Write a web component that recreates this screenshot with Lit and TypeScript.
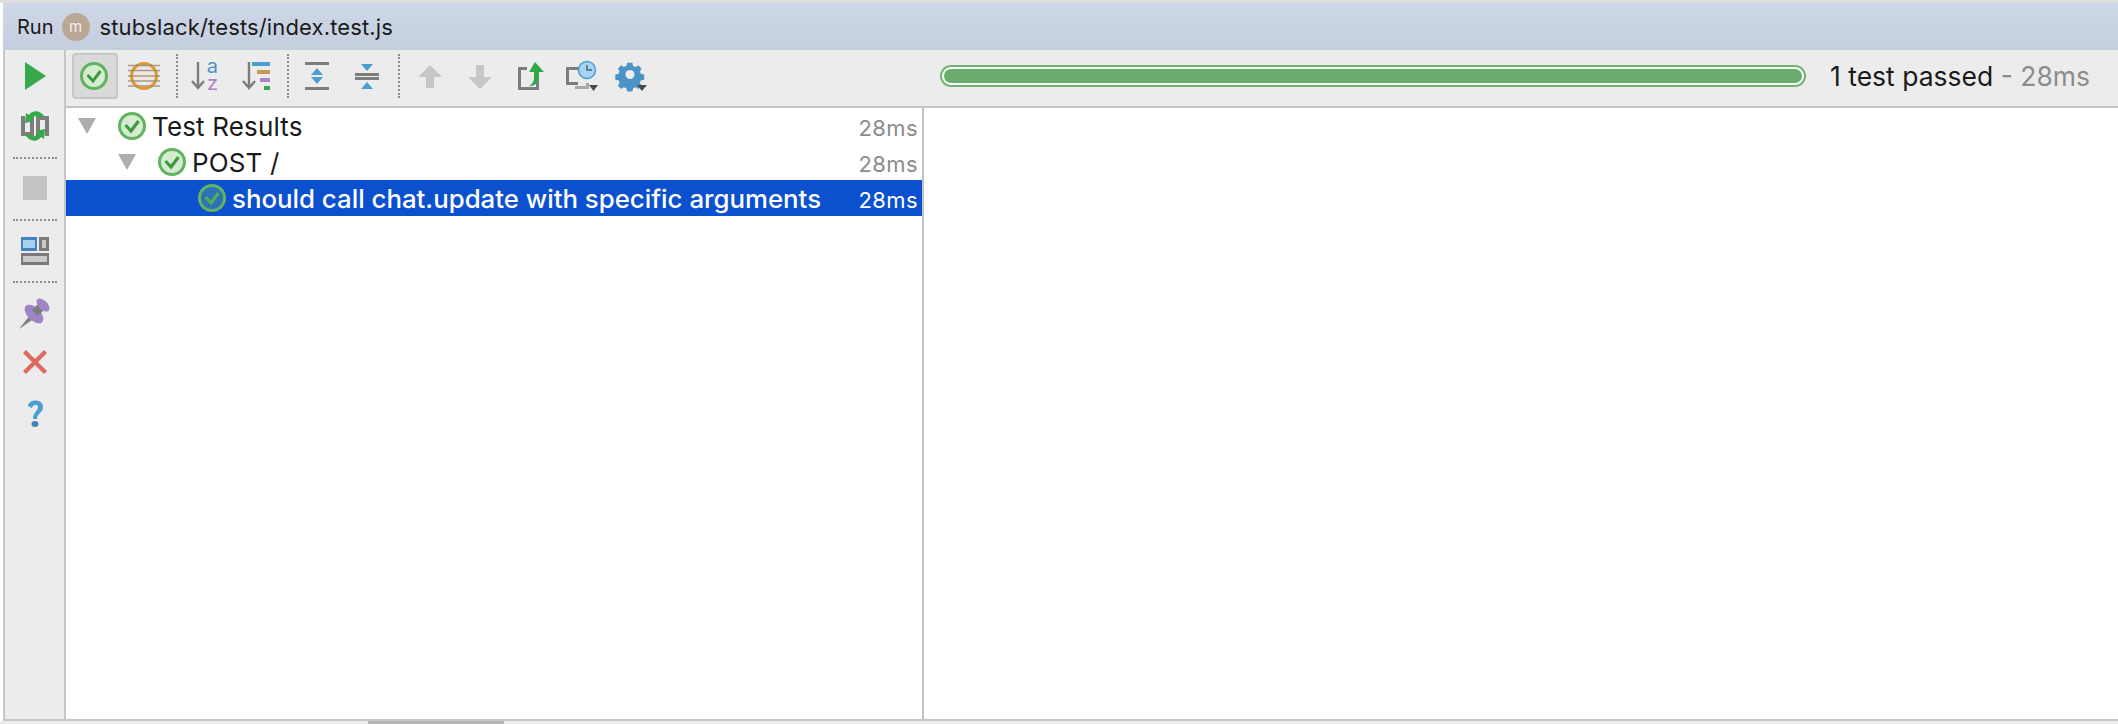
import { LitElement, html, css, svg } from "lit";
import { customElement } from "lit/decorators.js";

const check = (sel = false) => html`<svg class="chk" width="30" height="30" viewBox="0 0 30 30">
  <circle cx="15" cy="15" r="12.500" fill="${sel ? "#2d72b8" : "#d5ecd3"}" stroke="#62b25f" stroke-width="3"/>
  <path d="M8.500 14l5.500 6 7.500-10" fill="none" stroke="${sel ? "#4fb04f" : "#3f9a3f"}" stroke-width="3.200"/>
</svg>`;

const tri = html`<svg width="18" height="16" viewBox="0 0 18 16"><path d="M0 0h18l-9 16z" fill="#adadad"/></svg>`;

const ICONS: Record<string, unknown> = {
  play: svg`<path d="M6 2l21 14-21 14z" fill="#35a84a"/>`,
  rerun: svg`<g transform="translate(0 1)"><path d="M2 6h4v16h5v-16h4v20h-13zM17 6h13v20h-4v-16h-5v16h-4z" fill="#7d7d7d"/>
    <path d="M25 6C21 0 13 0 10 5L7 3 6 13l9-2-2-2.500c3-3.500 6-3.500 8-.5z" fill="#36a84a"/>
    <path d="M25 6C21 0 13 0 10 5L7 3 6 13l9-2-2-2.500c3-3.500 6-3.500 8-.5z" fill="#36a84a" transform="rotate(180 16 16)"/></g>`,
  stop: svg`<rect x="4" y="3" width="24" height="24" fill="#c4c4c4"/>`,
  layout: svg`<rect x="2" y="2" width="16" height="14" fill="#3f83c2"/><rect x="4" y="5" width="12" height="8" fill="#a9d2f2"/>
    <rect x="20" y="2" width="10" height="14" fill="#7a7a7a"/><rect x="23" y="5" width="4" height="8" fill="#c9c9c9"/>
    <rect x="2" y="18" width="28" height="12" fill="#7a7a7a"/><rect x="4" y="21" width="24" height="6" fill="#c9c9c9"/>`,
  pin: svg`<path d="M0 32l12-15 4 4z" fill="#7d7d7d"/>
    <ellipse cx="15" cy="17" rx="6.500" ry="11.500" transform="rotate(-45 15 17)" fill="#a184c8"/>
    <path d="M13 13l7-7 6 6-7 7z" fill="#7d7d7d"/>
    <ellipse cx="24" cy="8" rx="4.500" ry="8" transform="rotate(-45 24 8)" fill="#a184c8"/>`,
  close: svg`<path d="M7 4l9 9 9-9 3 3-9 9 9 9-3 3-9-9-9 9-3-3 9-9-9-9z" fill="#dd6a5c"/>`,
  help: svg`<path d="M9 10c0-7 15-8 15 1 0 6-6 6-6 12h-4c0-7 5-8 5-12 0-3-5-3-6 1z" fill="#4b9fd0"/><ellipse cx="16" cy="28" rx="3.500" ry="3" fill="#3f86b8"/>`,
  filterPass: svg`<g transform="translate(-1 0)"><circle cx="16" cy="16" r="12.500" fill="#d5ecd3" stroke="#62b25f" stroke-width="3"/><path d="M9.500 15l5.500 6 7.500-10" fill="none" stroke="#3f9a3f" stroke-width="3"/></g>`,
  filterIgn: svg`<g transform="translate(-1 0)"><circle cx="16" cy="16" r="12.500" fill="#efe8dc" stroke="#dd9c2c" stroke-width="3"/>
    <path d="M0 5.500h32M0 10.500h32M0 16h32M0 21h32M0 26h32" stroke="#9c8c7c" stroke-width="1.600" opacity=".85"/></g>`,
  sortAz: svg`<path d="M8 2v26M2 21l6 7 6-7" fill="none" stroke="#7d7d7d" stroke-width="2.400"/>`,
  sortDur: svg`<path d="M9 2v26M3 21l6 7 6-7" fill="none" stroke="#7d7d7d" stroke-width="2.400"/>
    <rect x="12" y="2" width="18" height="4" fill="#4b9fd0"/><rect x="17" y="10" width="13" height="4" fill="#c99a4e"/>
    <rect x="20" y="18" width="10" height="4" fill="#a884c8"/><rect x="24" y="26" width="6" height="4" fill="#36a84a"/>`,
  expand: svg`<rect x="4" y="2" width="24" height="3" fill="#7d7d7d"/><rect x="4" y="27" width="24" height="3" fill="#7d7d7d"/>
    <path d="M16 8l6 7h-12z" fill="#4b9fd0"/><path d="M16 24l6-7h-12z" fill="#4b9fd0"/>`,
  collapse: svg`<rect x="4" y="13" width="24" height="3" fill="#7d7d7d"/><rect x="4" y="17" width="24" height="3" fill="#7d7d7d"/>
    <path d="M16 11l6-7h-12z" fill="#4b9fd0"/><path d="M16 22l6 7h-12z" fill="#4b9fd0"/>`,
  up: svg`<path d="M16 5l12 12h-8v11h-8v-11h-8z" fill="#c6c6c6"/>`,
  down: svg`<path d="M16 29l12-12h-8v-12h-8v12h-8z" fill="#c6c6c6"/>`,
  exportT: svg`<path d="M4 7h9v3h-6v17h15v-8h3v11h-21z" fill="#7d7d7d"/>
    <path d="M21 2l9 10h-5v5c0 6-4 9-10 9 3-2 5-4 5-9v-5h-5z" fill="#2ea84a"/>`,
  history: svg`<path d="M2 7h15v3h-12v12h9v3h-12z" fill="#7d7d7d"/><path d="M22 20v3h3v6h-14v-3h11z" fill="#a9a9a9"/>
    <circle cx="23" cy="10" r="8.500" fill="#a9d2f2" stroke="#4b9fd0" stroke-width="1.500"/><path d="M23 5v5h5" fill="none" stroke="#3d6a8a" stroke-width="1.500"/>
    <path d="M25 25h9l-4.500 6z" fill="#4a4a4a"/>`,
  gear: svg`<path d="M12 2h6l1 4 3 1 3-2 4 4-2 3 1 3 4 1v6l-4 1-1 3 2 3-4 4-3-2-3 1-1 4h-6l-1-4-3-1-3 2-4-4 2-3-1-3-4-1v-6l4-1 1-3-2-3 4-4 3 2 3-1z" transform="translate(0 1) scale(.85)" fill="#4b94c6"/>
    <circle cx="13" cy="14.500" r="4.500" fill="#ececec"/><path d="M20 25h10l-5 6z" fill="#4a4a4a"/>`,
};

const icon = (n: string, w = 32) =>
  html`<svg width="${w}" height="${w}" viewBox="0 0 32 32" overflow="visible">${ICONS[n]}</svg>`;

@customElement("app-root")
export class AppRoot extends LitElement {
  static styles = css`
    :host {
      display: flex;
      flex-direction: column;
      width: 2118px;
      height: 724px;
      overflow: hidden;
      background: #fff;
      font-family: Inter, "Liberation Sans", sans-serif;
      color: #1a1a1a;
    }
    .top-edge { height: 3px; flex: none; background: #dedede; }
    .frame { flex: 1; display: flex; flex-direction: column; min-height: 0; margin-left: 3px; border-left: 2px solid #c6c6c6; border-bottom: 2px solid #c6c6c6; }
    .title {
      height: 47px; flex: none; display: flex; align-items: center;
      background: linear-gradient(#cfd8e7, #c5cede);
      margin-left: -2px; padding-left: 14px; font-size: 22px; letter-spacing: 0.14px;
    }
    .run { font-size: 20px; letter-spacing: 0; }
    .avatar {
      width: 28px; height: 28px; border-radius: 50%; background: #baa896; color: #f3eee9;
      display: flex; align-items: center; justify-content: center; font-size: 15px; margin: 0 10px 0 8px;
    }
    .body { flex: 1; display: flex; min-height: 0; }
    .side { width: 59px; flex: none; background: #ececec; display: flex; flex-direction: column; align-items: center; padding-top: 1px; box-sizing: border-box; }
    .s { display: flex; align-items: center; justify-content: center; flex: none; width: 100%; }
    .s50 { height: 50px; }
    .s48 { height: 48px; }
    .s46 { height: 46px; }
    .s44 { height: 44px; }
    .s54 { height: 54px; }
    .hsep { flex: none; width: 44px; border-top: 2px dotted #8e8e8e; margin: 8px 0; }
    .main { flex: 1; display: flex; flex-direction: column; min-width: 0; border-left: 2px solid #c6c6c6; }
    .bar {
      height: 58px; flex: none; background: #ececec; display: flex; align-items: center;
      border-bottom: 2px solid #c4c4c4; box-sizing: border-box; padding-bottom: 4px;
    }
    .tools { width: 874px; flex: none; display: flex; align-items: center; padding-left: 6px; box-sizing: border-box; }
    .t { width: 50px; height: 46px; flex: none; display: flex; align-items: center; justify-content: center; }
    .t.on { width: 46px; background: #d9d9d9; border: 2px solid #c6c6c6; border-radius: 4px; box-sizing: border-box; margin-right: 2px; }
    .t.gear { margin-left: 3px; }
    .vsep { width: 0; height: 44px; flex: none; border-left: 2px dotted #8e8e8e; margin: 0 3px 0 6px; }
    .vsep.last { margin-right: 5px; }
    .az { position: relative; }
    .az b { position: absolute; right: 13px; font: 400 20px/14px Inter, "Liberation Sans", sans-serif; }
    .az .a { top: 6px; color: #4b94c6; }
    .az .z { top: 23px; color: #a884c8; }
    .progress {
      width: 866px; height: 22px; flex: none; box-sizing: border-box; border: 2px solid #6db56e;
      border-radius: 11px; padding: 2px; background: #fff;
    }
    .progress div { height: 100%; border-radius: 7px; background: #6aab6e; }
    .status { margin-left: 24px; font-size: 26.500px; white-space: nowrap; }
    .status span { color: #8c8c8c; }
    .panes { flex: 1; display: flex; min-height: 0; }
    .tree { width: 856px; flex: none; border-right: 2px solid #c4c4c4; }
    .row { height: 36px; display: flex; align-items: center; font-size: 26px; padding-right: 4px; }
    .row.sel { background: #0b50cf; color: #fff; font-weight: 500; font-size: 25.800px; }
    .row .arrow { width: 18px; height: 16px; flex: none; margin-left: 12px; margin-right: 21px; display: flex; }
    .row .chk { flex: none; margin-right: 5px; }
    .row .name { flex: 1; white-space: nowrap; padding-top: 1px; letter-spacing: 0.15px; }
    .row.sel .name { letter-spacing: 0; }
    .row .time { color: #8c8c8c; font-size: 22px; letter-spacing: 0.4px; font-weight: 400; padding-top: 3px; }
    .row.sel .time { color: #fff; }
    .d1 { padding-left: 40px; }
    .d2 { padding-left: 80px; }
    .right { flex: 1; }
    .foot { height: 3px; flex: none; background: #ececec; display: flex; }
    .thumb { width: 136px; margin-left: 368px; background: #b4b4b4; }
  `;

  render() {
    return html`
      <div class="top-edge"></div>
      <div class="frame">
        <div class="title"><span class="run">Run</span><span class="avatar">m</span>stubslack/tests/index.test.js</div>
        <div class="body">
          <div class="side">
            <div class="s s50">${icon("play")}</div>
            <div class="s s48">${icon("rerun")}</div>
            <div class="hsep"></div>
            <div class="s s44">${icon("stop")}</div>
            <div class="hsep"></div>
            <div class="s s44">${icon("layout")}</div>
            <div class="hsep"></div>
            <div class="s s44">${icon("pin")}</div>
            <div class="s s54">${icon("close")}</div>
            <div class="s s46">${icon("help")}</div>
          </div>
          <div class="main">
            <div class="bar">
              <div class="tools">
                <div class="t on">${icon("filterPass")}</div>
                <div class="t">${icon("filterIgn")}</div>
                <div class="vsep"></div>
                <div class="t az">${icon("sortAz")}<b class="a">a</b><b class="z">z</b></div>
                <div class="t">${icon("sortDur")}</div>
                <div class="vsep"></div>
                <div class="t">${icon("expand")}</div>
                <div class="t">${icon("collapse")}</div>
                <div class="vsep last"></div>
                <div class="t">${icon("up")}</div>
                <div class="t">${icon("down")}</div>
                <div class="t">${icon("exportT")}</div>
                <div class="t">${icon("history")}</div>
                <div class="t gear">${icon("gear")}</div>
              </div>
              <div class="progress"><div></div></div>
              <div class="status">1 test passed <span>- 28ms</span></div>
            </div>
            <div class="panes">
              <div class="tree">
                <div class="row"><span class="arrow">${tri}</span>${check()}<span class="name">Test Results</span><span class="time">28ms</span></div>
                <div class="row d1"><span class="arrow">${tri}</span>${check()}<span class="name">POST /</span><span class="time">28ms</span></div>
                <div class="row sel d2"><span class="arrow"></span>${check(true)}<span class="name">should call chat.update with specific arguments</span><span class="time">28ms</span></div>
              </div>
              <div class="right"></div>
            </div>
          </div>
        </div>
      </div>
      <div class="foot"><div class="thumb"></div></div>
    `;
  }
}
